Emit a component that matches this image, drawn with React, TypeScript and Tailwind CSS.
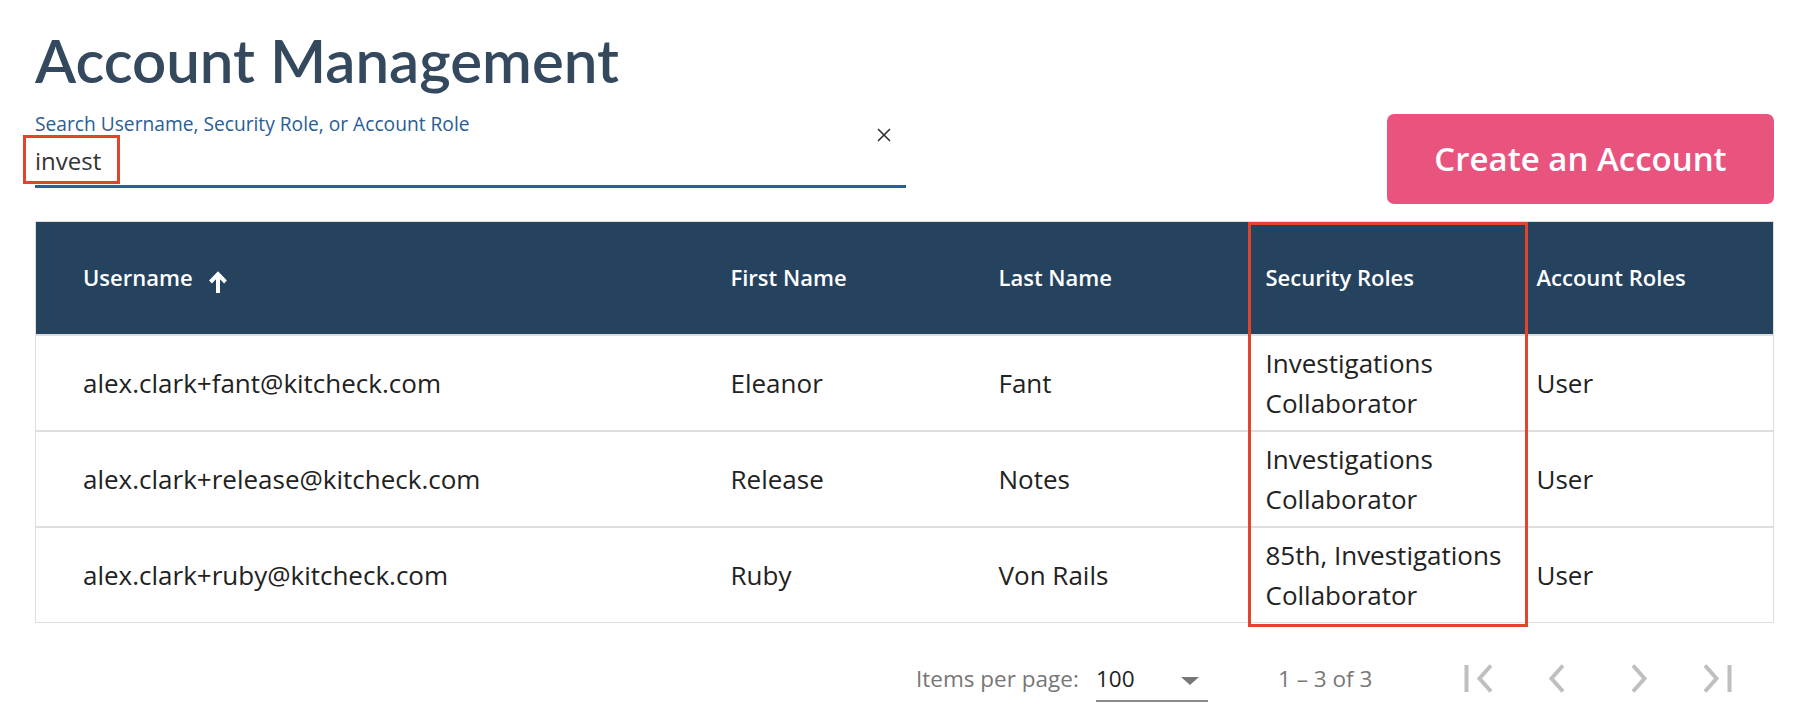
import React from 'react';
import { X } from 'lucide-react';

const rows = [
  { username: 'alex.clark+fant@kitcheck.com', first: 'Eleanor', last: 'Fant', security: 'Investigations Collaborator', account: 'User' },
  { username: 'alex.clark+release@kitcheck.com', first: 'Release', last: 'Notes', security: 'Investigations Collaborator', account: 'User' },
  { username: 'alex.clark+ruby@kitcheck.com', first: 'Ruby', last: 'Von Rails', security: '85th, Investigations Collaborator', account: 'User' },
];

// pager glyphs: grey chevrons, with a bar for first / last
const PagerIcon = ({ kind }: { kind: 'first' | 'prev' | 'next' | 'last' }) => (
  <svg viewBox="0 0 40 36" className="w-[40px] h-[36px]" fill="none" stroke="#bfbfbf" strokeWidth={4}>
    {kind === 'first' && (
      <>
        <path d="M6.5 4v27" />
        <path d="M31 4.5L19.5 17.5 31 30.5" />
      </>
    )}
    {kind === 'prev' && <path d="M23 4.5L11.5 17.5 23 30.5" />}
    {kind === 'next' && <path d="M13 4.5L24.5 17.5 13 30.5" />}
    {kind === 'last' && (
      <>
        <path d="M5 4.5L16.5 17.5 5 30.5" />
        <path d="M29.5 4v27" />
      </>
    )}
  </svg>
);

const SortArrow = () => (
  <svg viewBox="0 0 20 22" className="w-[20px] h-[22px] mt-[8px]" fill="none" stroke="white" strokeWidth={4}>
    <path d="M10 22V4" />
    <path d="M2.5 11L10 3.2l7.5 7.8" />
  </svg>
);

const App = () => {
  return (
    <div className="min-h-screen bg-white pl-[35px] pr-[40px] text-[#333] font-['Open_Sans',sans-serif]">
      <h1 className="pt-[30px] text-[60px] leading-none font-semibold text-[#34495e] font-['Lato',sans-serif]">
        Account Management
      </h1>

      <div className="mt-[23px] flex justify-between items-start">
        <div className="w-[871px] border-b-[3px] border-[#2c5d94]">
          <div className="flex items-center justify-between h-[22px]">
            <span className="text-[19.2px] leading-[22px] text-[#2a5d96]">
              Search Username, Security Role, or Account Role
            </span>
            <X className="w-[22px] h-[22px] text-[#333] mt-[22px] mr-[11px]" strokeWidth={1.8} />
          </div>
          <div className="flex items-center h-[50px]">
            <div className="relative text-[24px] leading-[33px] text-[#333]">
              invest
              <div className="absolute -left-[12px] -top-[9px] -bottom-[7px] -right-[19px] border-[3px] border-[#e0452b]" />
            </div>
          </div>
        </div>
        <button className="mt-[1px] w-[387px] h-[90px] rounded-[7px] bg-[#e9547f] text-white text-[33px] font-semibold">
          Create an Account
        </button>
      </div>

      <div className="relative mt-[17px]">
        <table className="w-full table-fixed border-collapse border border-[#dedede]">
          <colgroup>
            <col className="w-[695px]" />
            <col className="w-[268px]" />
            <col className="w-[267px]" />
            <col className="w-[271px]" />
            <col />
          </colgroup>
          <thead>
            <tr className="bg-[#25425f] text-white text-[22px] h-[113px] text-left">
              <th className="pl-[47px] font-semibold">
                <span className="inline-flex items-center gap-[15px]">
                  Username
                  <SortArrow />
                </span>
              </th>
              <th className="font-semibold">First Name</th>
              <th className="font-semibold">Last Name</th>
              <th className="font-semibold">Security Roles</th>
              <th className="font-semibold">Account Roles</th>
            </tr>
          </thead>
          <tbody>
            {rows.map((r) => (
              <tr key={r.username} className="h-[96px] border-t-2 border-[#dedede] text-[26px] leading-[40px] text-[#222]">
                <td className="pl-[47px]">{r.username}</td>
                <td>{r.first}</td>
                <td>{r.last}</td>
                <td className="pr-[10px]">{r.security}</td>
                <td>{r.account}</td>
              </tr>
            ))}
          </tbody>
        </table>
        <div className="absolute left-[1213px] top-[1px] w-[280px] h-[405px] border-[3px] border-[#e0452b]" />
      </div>

      <div className="mt-[38px] flex items-start text-[22.5px] leading-[36px] text-[#777]">
        <div className="ml-[881px] w-[170px] whitespace-nowrap">Items per page:</div>
        <div className="ml-[10px] w-[112px] h-[41px] border-b-2 border-[#8a8a8a] flex items-start justify-between">
          <span className="text-[#222]">100</span>
          <svg viewBox="0 0 18 8" className="w-[18px] h-[8px] mr-[9px] mt-[16px]" fill="#777">
            <path d="M0 0l9 8 9-8z" />
          </svg>
        </div>
        <div className="ml-[70px] w-[112px] whitespace-nowrap">1 – 3 of 3</div>
        <div className="ml-[70px] flex items-center gap-[40px]">
          <PagerIcon kind="first" />
          <PagerIcon kind="prev" />
          <PagerIcon kind="next" />
          <PagerIcon kind="last" />
        </div>
      </div>
    </div>
  );
};

export default App;
